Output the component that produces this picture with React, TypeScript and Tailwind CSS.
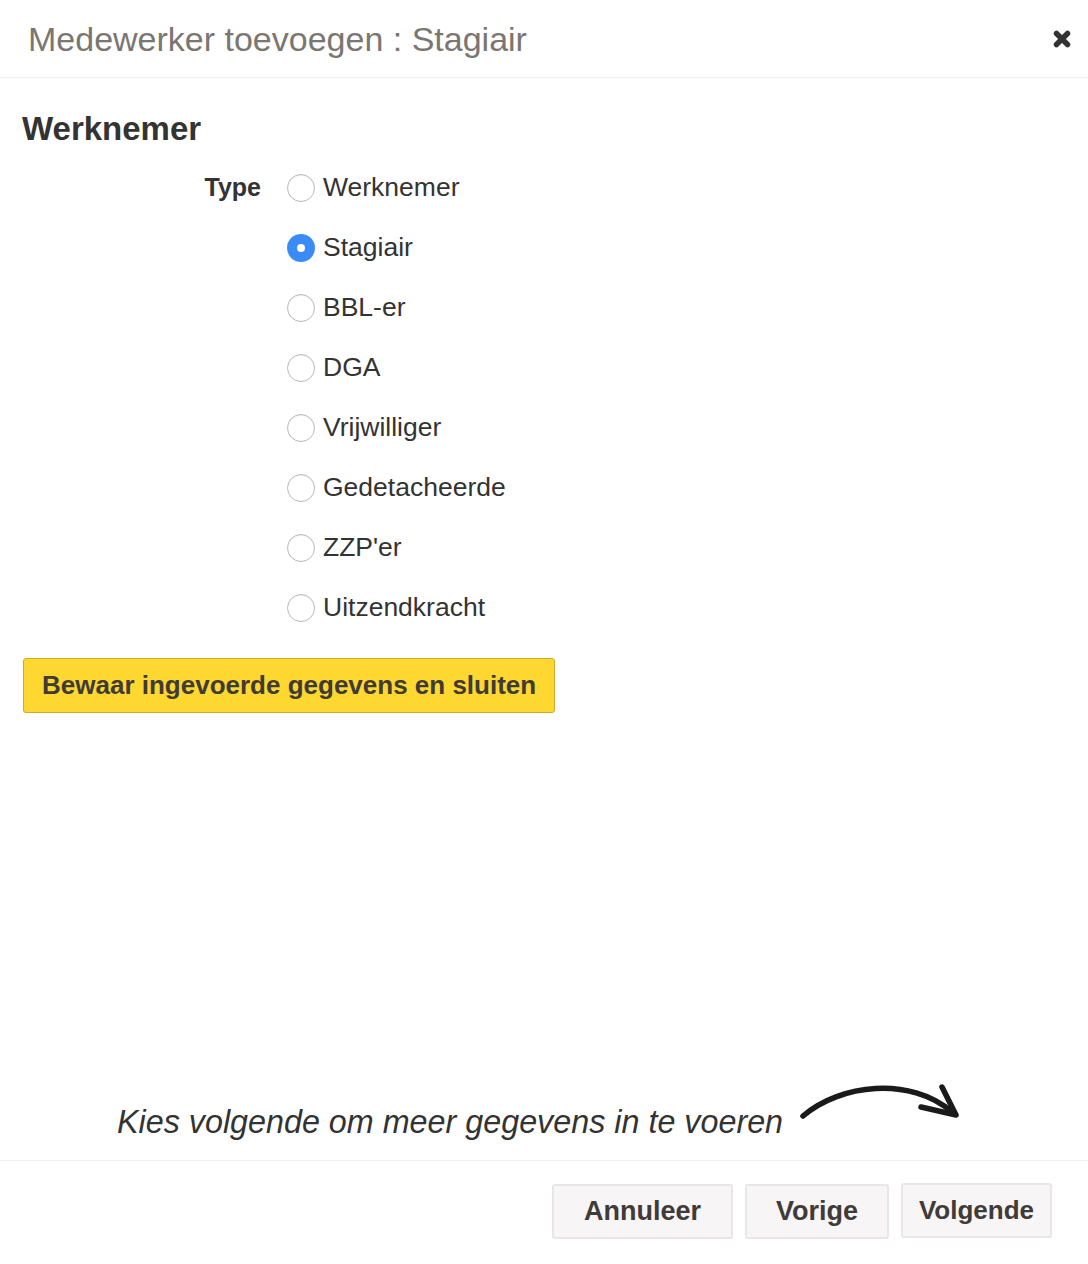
import { useState } from "react";

const types = [
    "Werknemer",
    "Stagiair",
    "BBL-er",
    "DGA",
    "Vrijwilliger",
    "Gedetacheerde",
    "ZZP'er",
    "Uitzendkracht",
];

const Radio = ({ checked }: { checked: boolean }) => {
    if (checked) {
        return (
            <span className="w-[28px] h-[28px] rounded-full bg-[#3a8bf6] flex items-center justify-center shrink-0">
                <span className="w-[8px] h-[8px] rounded-full bg-white"></span>
            </span>
        );
    }
    return (
        <span className="w-[28px] h-[28px] rounded-full bg-white border border-[#b9b9b9] shadow-[inset_0_1px_1px_rgba(0,0,0,0.08)] shrink-0"></span>
    );
};

const App = () => {
    const [selected, setSelected] = useState<string>("Stagiair");

    return (
        <div className="min-h-[1264px] w-[1088px] bg-white flex flex-col text-[#333] font-['Liberation_Sans',Arial,sans-serif]">
            {/* header */}
            <div className="h-[78px] flex items-center justify-between pl-[28px] pr-[16px] border-b border-[#f1f1f1] shadow-[0_1px_2px_rgba(0,0,0,0.02)]">
                <h1 className="text-[34px] leading-none text-[#7a7672]">Medewerker toevoegen : Stagiair</h1>
                <button className="w-[20px] h-[20px] flex items-center justify-center" title="Sluiten">
                    <svg width="18" height="18" viewBox="0 0 18 18">
                        <path d="M3.5 3.5 L14.5 14.5 M14.5 3.5 L3.5 14.5" stroke="#333" strokeWidth="5.5" strokeLinecap="round" />
                    </svg>
                </button>
            </div>

            {/* body */}
            <div className="flex-1 px-[22px] pt-[31px]">
                <h2 className="text-[33px] leading-[1.2] font-bold text-[#333]">Werknemer</h2>
                <div className="mt-[9px] flex">
                    <div className="w-[239px] shrink-0 h-[60px] flex items-center justify-end">
                        <span className="text-[25px] font-bold">Type</span>
                    </div>
                    <div className="ml-[26px] flex flex-col">
                        {types.map((t) => (
                            <label
                                key={t}
                                className="h-[60px] flex items-center gap-[8px] cursor-pointer"
                                onClick={() => setSelected(t)}>
                                <Radio checked={selected === t} />
                                <span className="text-[26.5px] text-[#333]">{t}</span>
                            </label>
                        ))}
                    </div>
                </div>
                <button className="mt-[20px] ml-px h-[55px] px-[18px] rounded-[3px] bg-[#ffd731] border border-[#cdaa2a] text-[26px] font-bold text-[#403b36]">
                    Bewaar ingevoerde gegevens en sluiten
                </button>
            </div>

            {/* hint */}
            <div className="h-[82px] flex items-center pl-[117px]">
                <span className="text-[32.3px] italic text-[#333] pt-[6px]">Kies volgende om meer gegevens in te voeren</span>
                <svg className="ml-[17px] -mt-[32px]" width="164" height="46" viewBox="0 0 164 46">
                    <path d="M3 36 C 40 4, 110 -4, 152 32" fill="none" stroke="#1a1a1a" strokeWidth="5.5" strokeLinecap="round" />
                    <path d="M142 7 L156 35 L121 27" fill="none" stroke="#1a1a1a" strokeWidth="5.5" strokeLinecap="round" strokeLinejoin="round" />
                </svg>
            </div>

            {/* footer */}
            <div className="border-t border-[#f1f1f1] pt-[23px] pb-[25px] pr-[36px] flex justify-end gap-[12px]">
                <button className="w-[181px] h-[55px] rounded-[3px] bg-[#f7f5f5] border-2 border-[#e8e6e6] text-[27px] font-bold text-[#403b38]">
                    Annuleer
                </button>
                <button className="w-[144px] h-[55px] rounded-[3px] bg-[#f7f5f5] border-2 border-[#e8e6e6] text-[27px] font-bold text-[#403b38]">
                    Vorige
                </button>
                <button className="w-[151px] h-[55px] -mt-px rounded-[3px] bg-[#f7f5f5] border-2 border-[#e8e6e6] text-[26px] font-bold text-[#403b38]">
                    Volgende
                </button>
            </div>
        </div>
    );
};

export default App;
